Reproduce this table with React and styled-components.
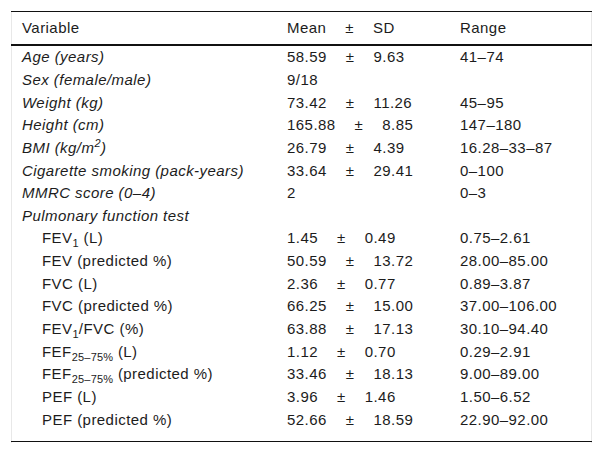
import React from "react";
import styled, { createGlobalStyle } from "styled-components";

const Global = createGlobalStyle`
  html, body { margin: 0; padding: 0; background: #fff; }
  body { font-family: "Liberation Sans", Arial, sans-serif; color: #1c1c1c; }
`;

const Frame = styled.div`
  margin: 11px 0 0 11px;
  width: 579px;
  border-left: 1px solid #e8e8e8;
  border-right: 1px solid #e8e8e8;
  padding-bottom: 1px;
`;

const Table = styled.div`
  margin: 0 -1px;
  border-top: 1px solid #111;
  border-bottom: 1px solid #111;
  padding-bottom: 11px;
  font-size: 15px;
  letter-spacing: 0.45px;
`;

const Row = styled.div`
  display: grid;
  grid-template-columns: 265px 173px 1fr;
  padding-left: 11px;
  height: ${(p) => (p.$head ? "31.5px" : "22.65px")};
  align-items: center;
  border-bottom: ${(p) => (p.$head ? "2px solid #111" : "none")};
  white-space: nowrap;
`;

const Label = styled.div`
  font-style: ${(p) => (p.$italic ? "italic" : "normal")};
  padding-left: ${(p) => (p.$indent ? "20px" : "0")};
`;

const Stat = styled.div`
  display: flex;
  align-items: baseline;
  gap: 19px;
`;

const Sub = styled.sub`
  font-size: 11px;
  vertical-align: -4px;
  line-height: 0;
  letter-spacing: 0.2px;
`;

const Sup = styled.sup`
  font-size: 11px;
  vertical-align: 6px;
  line-height: 0;
`;

const rows = [
  { label: "Age (years)", italic: true, m: "58.59", sd: "9.63", r: "41–74" },
  { label: "Sex (female/male)", italic: true, m: "9/18", r: "" },
  { label: "Weight (kg)", italic: true, m: "73.42", sd: "11.26", r: "45–95" },
  { label: "Height (cm)", italic: true, m: "165.88", sd: "8.85", r: "147–180" },
  { label: <>BMI (kg/m<Sup>2</Sup>)</>, italic: true, m: "26.79", sd: "4.39", r: "16.28–33–87" },
  { label: "Cigarette smoking (pack-years)", italic: true, m: "33.64", sd: "29.41", r: "0–100" },
  { label: "MMRC score (0–4)", italic: true, m: "2", r: "0–3" },
  { label: "Pulmonary function test", italic: true },
  { label: <>FEV<Sub>1</Sub> (L)</>, indent: true, m: "1.45", sd: "0.49", r: "0.75–2.61" },
  { label: "FEV (predicted %)", indent: true, m: "50.59", sd: "13.72", r: "28.00–85.00" },
  { label: "FVC (L)", indent: true, m: "2.36", sd: "0.77", r: "0.89–3.87" },
  { label: "FVC (predicted %)", indent: true, m: "66.25", sd: "15.00", r: "37.00–106.00" },
  { label: <>FEV<Sub>1</Sub>/FVC (%)</>, indent: true, m: "63.88", sd: "17.13", r: "30.10–94.40" },
  { label: <>FEF<Sub>25–75%</Sub> (L)</>, indent: true, m: "1.12", sd: "0.70", r: "0.29–2.91" },
  { label: <>FEF<Sub>25–75%</Sub> (predicted %)</>, indent: true, m: "33.46", sd: "18.13", r: "9.00–89.00" },
  { label: "PEF (L)", indent: true, m: "3.96", sd: "1.46", r: "1.50–6.52" },
  { label: "PEF (predicted %)", indent: true, m: "52.66", sd: "18.59", r: "22.90–92.00" },
];

export default function App() {
  return (
    <>
      <Global />
      <Frame>
        <Table>
          <Row $head>
            <Label>Variable</Label>
            <Stat>
              <span>Mean</span>
              <span>±</span>
              <span>SD</span>
            </Stat>
            <div>Range</div>
          </Row>
          {rows.map((row, i) => (
            <Row key={i}>
              <Label $italic={row.italic} $indent={row.indent}>
                {row.label}
              </Label>
              <Stat>
                {row.m && <span>{row.m}</span>}
                {row.sd && <span>±</span>}
                {row.sd && <span>{row.sd}</span>}
              </Stat>
              <div>{row.r}</div>
            </Row>
          ))}
        </Table>
      </Frame>
    </>
  );
}
